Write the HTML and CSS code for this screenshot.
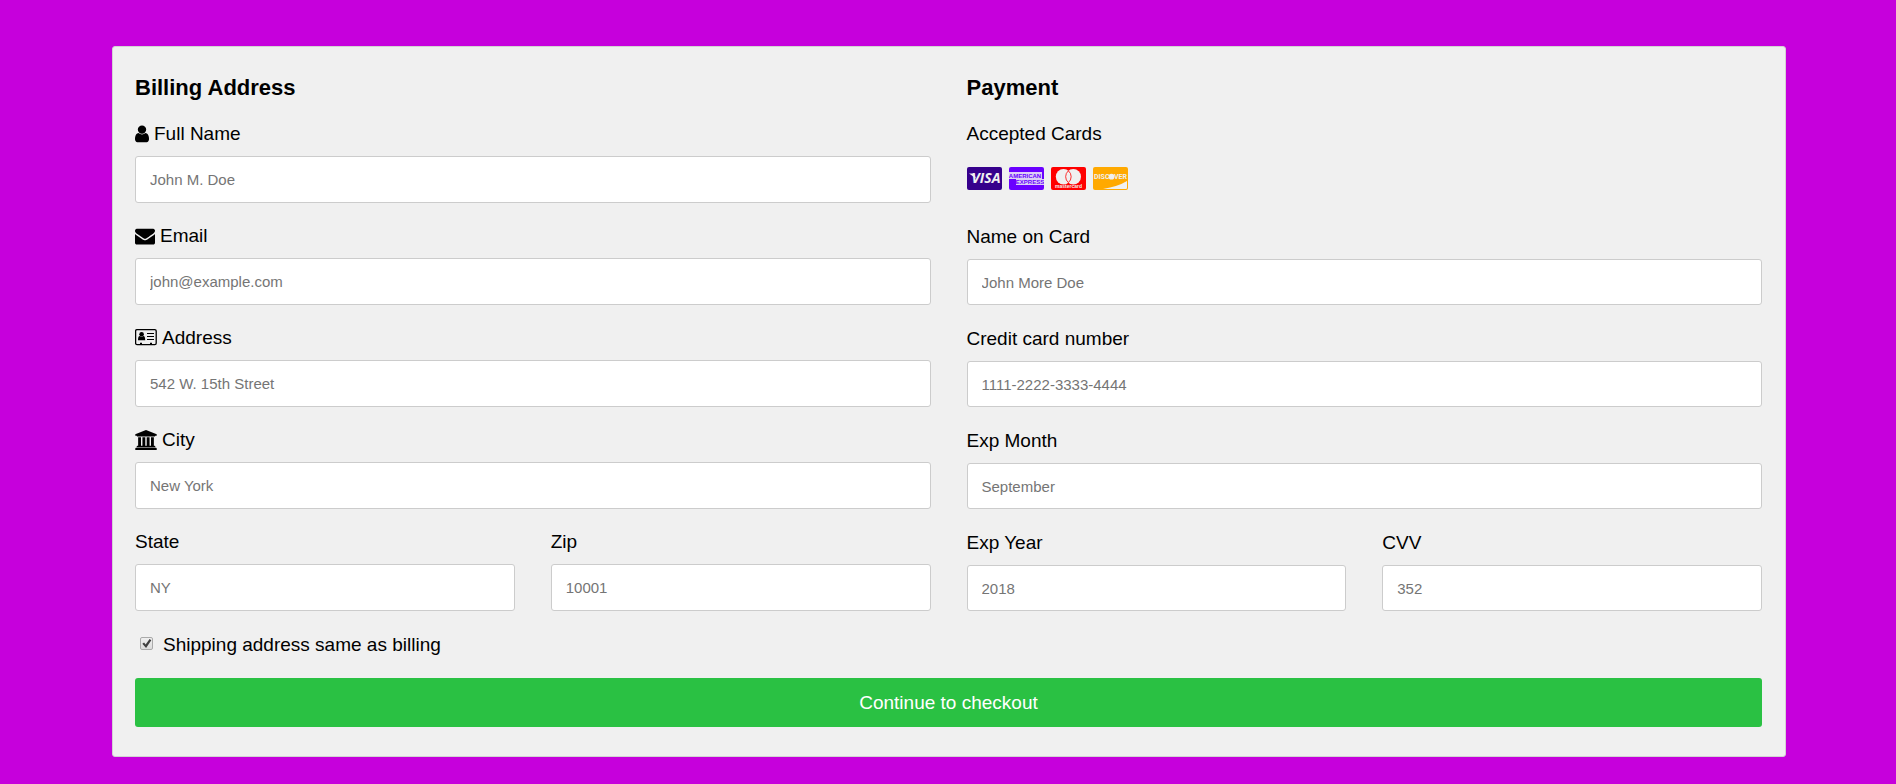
FILE: index.html
```html
<!DOCTYPE html>
<html lang="en">
<head>
<meta charset="utf-8">
<meta name="viewport" content="width=device-width, initial-scale=1">
<title>Checkout</title>
<link rel="stylesheet" href="styles.css">
</head>
<body>
<form class="checkout">
  <div class="columns">
    <section class="column">
      <h3 class="heading">Billing Address</h3>
      <div class="field">
        <label class="label" for="fname"><svg class="icon icon-user" viewBox="0 0 1280 1792" preserveAspectRatio="xMidYMin meet" aria-hidden="true"><path d="M1280 1399q0 109-62.5 187t-150.5 78h-854q-88 0-150.5-78t-62.5-187q0-85 8.5-160.5t31.5-152 58.5-131 94-89 134.5-34.5q131 128 313 128t313-128q76 0 134.5 34.5t94 89 58.5 131 31.5 152 8.5 160.5zm-256-887q0 159-112.5 271.5t-271.5 112.5-271.5-112.5-112.5-271.5 112.5-271.5 271.5-112.5 271.5 112.5 112.5 271.5z"/></svg>Full Name</label>
        <input class="input" type="text" id="fname" name="firstname" placeholder="John M. Doe">
      </div>
      <div class="field">
        <label class="label" for="email"><svg class="icon icon-mail" viewBox="0 0 1792 1792" preserveAspectRatio="xMidYMin meet" aria-hidden="true"><path d="M1792 710v794q0 66-47 113t-113 47h-1472q-66 0-113-47t-47-113v-794q44 49 101 87 362 246 497 345 57 42 92.5 65.5t94.5 48 110 24.5h2q51 0 110-24.5t94.5-48 92.5-65.5q170-123 498-345 57-39 100-87zm0-294q0 79-49 151t-122 123q-376 261-468 325-10 7-42.5 31t-54 38.5-52 32.5-57.5 27-50 9h-2q-23 0-50-9t-57.5-27-52-32.5-54-38.5-42.5-31q-91-64-262-182.5t-205-142.5q-62-42-117-115.5t-55-136.5q0-78 41.5-130t118.5-52h1472q65 0 112.5 47t47.5 113z"/></svg>Email</label>
        <input class="input" type="text" id="email" name="email" placeholder="john@example.com">
      </div>
      <div class="field">
        <label class="label" for="adr"><svg class="icon icon-card" viewBox="0 0 22 20" aria-hidden="true"><rect x="0.6" y="1.6" width="20.6" height="15" rx="1.4" fill="none" stroke="#000" stroke-width="1.3"/><circle cx="6.6" cy="6.3" r="2.3"/><path d="M3 12.2c0-2.6.6-4.2 1.8-4.2 1 .9 2.600.9 3.600 0C9.600 8 10.200 9.600 10.200 12.200z"/><path d="M12 5.500h7M12 8.500h7M12 11.500h7" fill="none" stroke="#000" stroke-width="1"/><path d="M5 14.800h2v1.500H5zM15 14.800h2v1.500h-2z"/></svg>Address</label>
        <input class="input" type="text" id="adr" name="address" placeholder="542 W. 15th Street">
      </div>
      <div class="field">
        <label class="label" for="city"><svg class="icon icon-bank" viewBox="0 0 1920 1792" preserveAspectRatio="xMidYMin meet" aria-hidden="true"><path d="M960 0l960 384v128h-128q0 26-20.5 45t-48.500 19h-1526q-28 0-48.500-19t-20.500-45h-128v-128zm-704 640h256v768h128v-768h256v768h128v-768h256v768h128v-768h256v768h59q28 0 48.500 19t20.500 45v64h-1664v-64q0-26 20.500-45t48.500-19h59v-768zm1595 960q28 0 48.500 19t20.500 45v128h-1920v-128q0-26 20.500-45t48.500-19h1782z"/></svg>City</label>
        <input class="input" type="text" id="city" name="city" placeholder="New York">
      </div>
      <div class="columns">
        <div class="field">
          <label class="label" for="state">State</label>
          <input class="input" type="text" id="state" name="state" placeholder="NY">
        </div>
        <div class="field">
          <label class="label" for="zip">Zip</label>
          <input class="input" type="text" id="zip" name="zip" placeholder="10001">
        </div>
      </div>
    </section>

    <section class="column payment">
      <h3 class="heading">Payment</h3>
      <div class="label">Accepted Cards</div>
      <div class="cards">
        <svg class="card" viewBox="0 0 35 23" role="img" aria-label="Visa"><rect width="35" height="23" rx="2" fill="#36008c"/><text class="visa" x="19" y="16" text-anchor="middle">VISA</text><path d="M2 6.500h5l2 5z" fill="#f0f0f0"/></svg>
        <svg class="card" viewBox="0 0 35 23" role="img" aria-label="American Express"><rect width="35" height="23" rx="2" fill="#6a00ff"/><path d="M0 5h33v7H0zM7 12h28v6H7z" fill="#ddd0f4"/><text class="amex" x="16" y="11" text-anchor="middle">AMERICAN</text><text class="amex" x="21" y="17" text-anchor="middle">EXPRESS</text></svg>
        <svg class="card" viewBox="0 0 35 23" role="img" aria-label="Mastercard"><rect width="35" height="23" rx="2" fill="#f00"/><circle cx="12.500" cy="9.700" r="7.700" fill="#f0f0f0"/><circle cx="22.300" cy="9.700" r="7.700" fill="#f0f0f0"/><path d="M17.400 3.800a7.700 7.700 0 0 1 0 11.800a7.700 7.700 0 0 1 0-11.800z" fill="#f0f0f0" stroke="#f00" stroke-width=".8"/><text class="mc" x="17.500" y="21" text-anchor="middle">mastercard</text></svg>
        <svg class="card" viewBox="0 0 35 23" role="img" aria-label="Discover"><rect width="35" height="23" rx="2" fill="#ffa900"/><path d="M34 14v7q0 1-1 1H10Q25 19.500 34 14z" fill="#f0f0f0"/><circle cx="18.500" cy="9.700" r="2.900" fill="#f0f0f0"/><text class="disc" x="1" y="12">DISC</text><text class="disc" x="34" y="12" text-anchor="end">VER</text></svg>
      </div>
      <div class="field">
        <label class="label" for="cname">Name on Card</label>
        <input class="input" type="text" id="cname" name="cardname" placeholder="John More Doe">
      </div>
      <div class="field">
        <label class="label" for="ccnum">Credit card number</label>
        <input class="input" type="text" id="ccnum" name="cardnumber" placeholder="1111-2222-3333-4444">
      </div>
      <div class="field">
        <label class="label" for="expmonth">Exp Month</label>
        <input class="input" type="text" id="expmonth" name="expmonth" placeholder="September">
      </div>
      <div class="columns">
        <div class="field">
          <label class="label" for="expyear">Exp Year</label>
          <input class="input" type="text" id="expyear" name="expyear" placeholder="2018">
        </div>
        <div class="field">
          <label class="label" for="cvv">CVV</label>
          <input class="input" type="text" id="cvv" name="cvv" placeholder="352">
        </div>
      </div>
    </section>
  </div>
  <label class="same"><input class="check" type="checkbox" name="sameadr" checked>Shipping address same as billing</label>
  <button class="submit" type="button">Continue to checkout</button>
</form>
</body>
</html>
```
FILE: styles.css
```css
* {
  box-sizing: border-box;
}

body {
  margin: 0;
  padding: 46px 110px 26px 112px;
  background: #c600dc;
  color: #000;
  font-family: "Liberation Sans", Arial, sans-serif;
  font-size: 19px;
  line-height: 22px;
}

.checkout {
  padding: 28px 23px 29px 22px;
  border: 1px solid #d3d3d3;
  border-radius: 3px;
  background: #f0f0f0;
}

.columns {
  display: grid;
  grid-template-columns: 1fr 1fr;
  gap: 36px;
}

.heading {
  margin: 0 0 22px;
  font-size: 22px;
  line-height: 26px;
}

.label {
  display: flex;
  align-items: center;
  gap: 5px;
  margin-bottom: 11px;
}

.icon {
  flex: none;
  height: 20px;
}

.icon-user {
  width: 14px;
}

.icon-mail {
  width: 20px;
}

.icon-card {
  width: 22px;
}

.icon-bank {
  width: 22px;
}

.input {
  display: block;
  width: 100%;
  height: 47px;
  margin-bottom: 22px;
  padding: 0 13px 0 14px;
  border: 1px solid #ccc;
  border-radius: 3px;
  background: #fff;
  font-family: inherit;
  font-size: 15px;
}

.payment .input {
  height: 46px;
  margin-bottom: 23px;
}

.input::placeholder {
  color: #757575;
}

.cards {
  display: flex;
  gap: 7px;
  height: 70px;
  padding-top: 11px;
}

.card {
  width: 35px;
  height: 23px;
}

.card text {
  fill: #f0f0f0;
  font-weight: bold;
}

.card .visa {
  font-family: "Open Sans", sans-serif;
  font-size: 14px;
  font-style: italic;
}

.card .amex {
  fill: #6a00ff;
  font-size: 6px;
}

.card .mc {
  font-size: 5px;
}

.card .disc {
  font-family: Roboto, sans-serif;
  font-size: 7px;
}

.same {
  display: flex;
  align-items: center;
  gap: 10px;
  width: fit-content;
  margin-bottom: 22px;
}

.check {
  appearance: none;
  width: 13px;
  height: 13px;
  margin: 0 0 3px 5px;
  border: 1px solid #aaa;
  border-radius: 2px;
  background: linear-gradient(#efefef, #dcdcdc);
}

.check:checked::before {
  content: "";
  display: block;
  height: 11px;
  background: #404040;
  clip-path: polygon(12% 52%, 28% 42%, 42% 58%, 78% 8%, 94% 20%, 46% 90%);
}

.submit {
  display: block;
  width: 100%;
  height: 49px;
  padding: 0;
  border: 0;
  border-radius: 3px;
  background: #2ac143;
  color: #fff;
  font-family: inherit;
  font-size: 19px;
  cursor: pointer;
}
```
